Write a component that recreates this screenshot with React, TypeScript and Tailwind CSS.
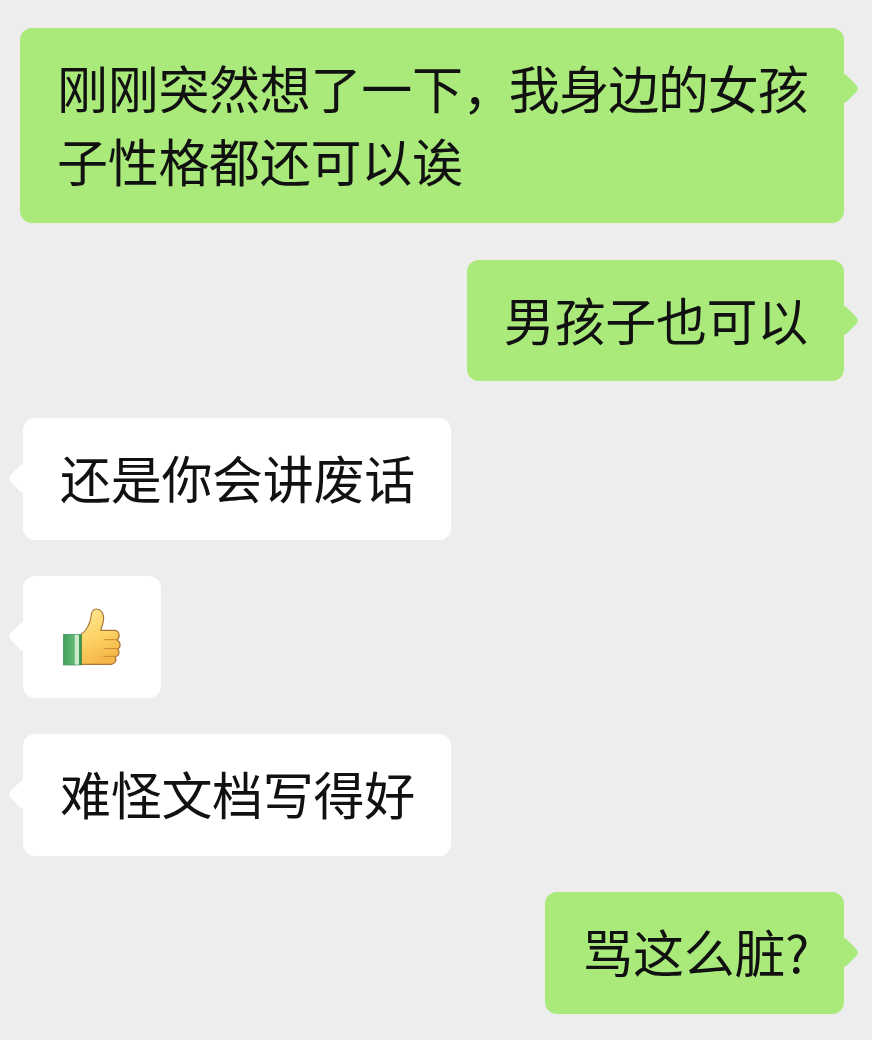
const font = "font-['Noto_Sans_CJK_SC','Noto_Sans',sans-serif]";

function Tail({ side, color }: { side: "left" | "right"; color: string }) {
  return (
    <span
      className={
        "absolute top-[49px] h-[23px] w-[23px] rotate-45 rounded-[5px] " +
        color +
        (side === "left" ? " left-[-11px]" : " right-[-11px]")
      }
    />
  );
}

function Mine({ children, className }: { children: React.ReactNode; className?: string }) {
  return (
    <div className={"relative self-end whitespace-nowrap rounded-[12px] bg-[#a9ea7a] pl-[37px] pt-[23px] text-[51px] leading-[73px] tracking-[-0.3px] text-[#111] " + (className ?? "pb-[26px] pr-[35px]")}>
      <Tail side="right" color="bg-[#a9ea7a]" />
      <span className="relative">{children}</span>
    </div>
  );
}

function Theirs({ children, plain }: { children: React.ReactNode; plain?: boolean }) {
  return (
    <div className={"relative ml-[23px] self-start whitespace-nowrap rounded-[12px] bg-white text-[51px] leading-[74px] tracking-[-0.3px] text-[#111] " + (plain ? "px-[39px] py-[24px]" : "pl-[37px] pr-[36px] pt-[22px] pb-[26px]")}>
      <Tail side="left" color="bg-white" />
      <span className={plain ? "relative flex h-[74px] items-center" : "relative"}>{children}</span>
    </div>
  );
}

function Thumb() {
  return (
    <svg width="60" height="60" viewBox="187 140 180 180" aria-hidden="true">
      <defs>
        <linearGradient id="hand" x1="0" y1="0" x2="0.3" y2="1">
          <stop offset="0" stopColor="#fee793" />
          <stop offset="0.55" stopColor="#fdd468" />
          <stop offset="1" stopColor="#f6b748" />
        </linearGradient>
        <linearGradient id="cuff" x1="0" y1="0" x2="1" y2="0">
          <stop offset="0" stopColor="#429f5a" />
          <stop offset="0.6" stopColor="#62b878" />
          <stop offset="0.68" stopColor="#d2ecd0" />
          <stop offset="0.86" stopColor="#c8e8c6" />
          <stop offset="0.88" stopColor="#3f9f5a" />
          <stop offset="1" stopColor="#35924f" />
        </linearGradient>
      </defs>
      <path
        d="M245 222 C258 212 270 192 274 170 C275 155 279 146 290 146 C303 146 313 158 312 176 C311 190 306 200 303 210 L345 210 C361 211 362 232 352 239 C364 245 364 262 354 266 C362 274 358 288 346 290 C353 299 346 312 332 312 L245 312 Z"
        fill="url(#hand)"
        stroke="#a9763a"
        strokeWidth="3.5"
        strokeLinejoin="round"
      />
      <path d="M315 238 H352 M315 265 H356 M312 288 H346" fill="none" stroke="#c98a34" strokeWidth="3" strokeLinecap="round" />
      <rect x="191" y="222" width="54" height="92" fill="url(#cuff)" stroke="#3f8f55" strokeWidth="2" />
    </svg>
  );
}

export default function App() {
  return (
    <div className={"flex h-[1040px] w-[872px] flex-col overflow-hidden bg-[#ededed] pr-[28px] pt-[28px] " + font}>
      <Mine className="mb-[37px] w-[824px] pb-[26px]">
        刚刚突然想了一下<span className="tracking-[-5px]">，</span>
        <span className="tracking-[-1.2px]">我身边的女孩</span>
        <br />
        子性格都还可以诶
      </Mine>
      <Mine className="mb-[37px] pb-[25px] pr-[36px]">男孩子也可以</Mine>
      <div className="mb-[36px] flex">
        <Theirs>还是你会讲废话</Theirs>
      </div>
      <div className="mb-[36px] flex">
        <Theirs plain>
          <Thumb />
        </Theirs>
      </div>
      <div className="mb-[36px] flex">
        <Theirs>难怪文档写得好</Theirs>
      </div>
      <Mine>骂这么脏?</Mine>
    </div>
  );
}
